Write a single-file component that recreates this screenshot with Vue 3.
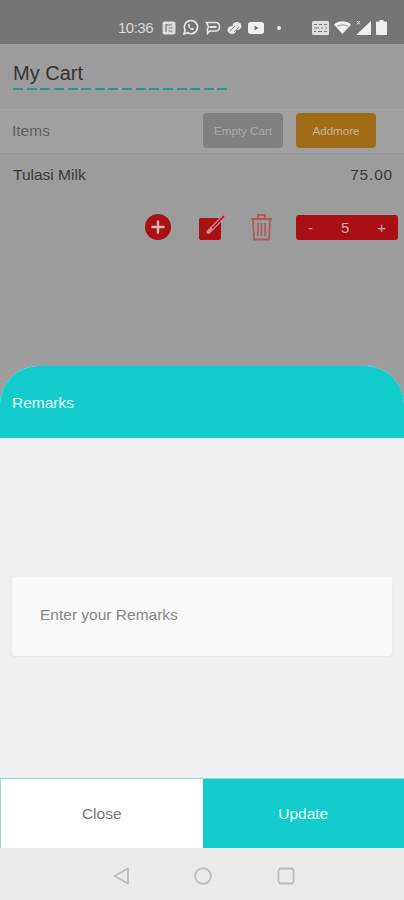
<template>
  <div class="screen">
    <!-- status bar -->
    <div class="status-bar">
      <span class="clock">10:36</span>
      <div class="status-icons">
        <svg width="14" height="14" viewBox="0 0 14 14"><rect x="0.5" y="0.5" width="13" height="13" rx="2" fill="#dcdcdc"/><path d="M4 3v8M4 4h6M6.5 7h4M6.5 10h4" stroke="#757575" stroke-width="1.2" fill="none"/></svg>
        <svg width="17" height="17" viewBox="0 0 17 17"><path d="M2 15l1-4a6.6 6.6 0 1 1 2.6 2.8z" fill="none" stroke="#e6e6e6" stroke-width="1.7"/><path d="M6 5.5c0 3 2.500 5.500 5.200 5.800l.8-1.600-1.800-1-.8.700c-1-.4-1.600-1.100-2-2l.7-.8-.9-1.800z" fill="#e6e6e6"/></svg>
        <svg width="16" height="15" viewBox="0 0 16 15"><path d="M1.500 2.500h9c2.500 0 4 2 4 4.500s-1.500 4-4 4h-6l-2 2.500v-4.500l1-2-2-4.500z" fill="none" stroke="#e6e6e6" stroke-width="1.500"/><rect x="4.500" y="6" width="7" height="2" fill="#e6e6e6"/></svg>
        <svg width="15" height="14" viewBox="0 0 15 14"><ellipse cx="5" cy="9" rx="4.500" ry="4" fill="#e6e6e6"/><ellipse cx="10" cy="5" rx="4.500" ry="4" fill="#e6e6e6"/><path d="M3 10l5-5M7 11l5-5" stroke="#757575" stroke-width="0.800"/></svg>
        <svg width="16" height="12" viewBox="0 0 16 12"><rect width="16" height="12" rx="2.500" fill="#f0f0f0"/><path d="M6.500 3.500v5l4-2.500z" fill="#757575"/></svg>
        <span class="dot"></span>
      </div>
      <div class="status-right">
        <svg width="17" height="14" viewBox="0 0 17 14"><rect width="17" height="14" rx="1.500" fill="#dedede"/><path d="M2 3.500h3M7 3.500h3M12 3.500h3M2 7h5M9 7h2M13 7h2M2 10.500h2M6 10.500h4M12 10.500h3" stroke="#757575" stroke-width="1.200"/></svg>
        <svg width="17" height="13" viewBox="0 0 17 13"><path d="M0 3.500C4.500-.8 12.500-.8 17 3.500L8.500 13z" fill="#f0f0f0"/><path d="M3.200 5.300c3-1.800 7.600-1.800 10.600 0" stroke="#757575" stroke-width="0.800" fill="none"/></svg>
        <svg width="15" height="15" viewBox="0 0 15 15"><path d="M15 1v14H0z" fill="#f0f0f0"/><path d="M1 1l3 3.500M4 1L1 4.500" stroke="#e6e6e6" stroke-width="1"/></svg>
        <svg width="11" height="15" viewBox="0 0 11 15"><path d="M3.500 0h4v1.500H10a1 1 0 0 1 1 1V14a1 1 0 0 1-1 1H1a1 1 0 0 1-1-1V2.500a1 1 0 0 1 1-1h2.500z" fill="#f0f0f0"/></svg>
      </div>
    </div>

    <!-- page behind the sheet -->
    <div class="cart-page">
      <div class="cart-head">
        <h1 class="cart-title">My Cart</h1>
        <div class="dash-line"></div>
      </div>

      <div class="items-row">
        <span class="items-label">Items</span>
        <button class="btn btn-empty">Empty Cart</button>
        <button class="btn btn-add">Addmore</button>
      </div>

      <div class="product-row">
        <span>Tulasi Milk</span>
        <span class="price">75.00</span>
      </div>

      <div class="actions-row">
        <svg width="26" height="26" viewBox="0 0 26 26"><circle cx="13" cy="13" r="13" fill="#a81014"/><path d="M13 7.500v11M7.500 13h11" stroke="#ddb6b6" stroke-width="2.400" stroke-linecap="round"/></svg>
        <svg class="act-edit" width="27" height="27" viewBox="0 0 27 27"><path d="M2 4h20v20a2 2 0 0 1-2 2H2a2 2 0 0 1-2-2V6a2 2 0 0 1 2-2z" fill="#a81014"/><path d="M9.500 18L25 2" stroke="#c98a8a" stroke-width="4" stroke-linecap="round"/><path d="M13 14.500L25 2" stroke="#a81014" stroke-width="1.400"/></svg>
        <svg class="act-trash" width="23" height="28" viewBox="0 0 23 28"><path d="M1 6h21M8 5V2h7v3" stroke="#b45a5e" stroke-width="1.800" fill="none"/><path d="M3 6.500l1 20h15l1-20" fill="none" stroke="#b45a5e" stroke-width="1.800"/><path d="M8 10v13M11.500 10v13M15 10v13" stroke="#b45a5e" stroke-width="1.600"/></svg>
        <div class="stepper">
          <span>-</span>
          <span>5</span>
          <span>+</span>
        </div>
      </div>
    </div>

    <!-- remarks sheet -->
    <div class="sheet">
      <div class="sheet-head">Remarks</div>
      <div class="sheet-body">
        <div class="remarks-input">Enter your Remarks</div>
      </div>
      <div class="sheet-foot">
        <button class="foot-btn foot-close">Close</button>
        <button class="foot-btn foot-update">Update</button>
      </div>
    </div>

    <!-- android nav -->
    <div class="nav-bar">
      <svg width="16" height="18" viewBox="0 0 16 18"><path d="M15 1.500v15L1.500 9z" fill="none" stroke="#bdbdbd" stroke-width="1.800" stroke-linejoin="round"/></svg>
      <svg width="18" height="18" viewBox="0 0 18 18"><circle cx="9" cy="9" r="7.800" fill="none" stroke="#bdbdbd" stroke-width="1.800"/></svg>
      <svg width="18" height="18" viewBox="0 0 18 18"><rect x="1.500" y="1.500" width="15" height="15" rx="2.500" fill="none" stroke="#bdbdbd" stroke-width="1.800"/></svg>
    </div>
  </div>
</template>

<script setup>
</script>

<style>
html, body {
  margin: 0;
  padding: 0;
}
</style>

<style scoped>
.screen {
  width: 404px;
  height: 900px;
  display: flex;
  flex-direction: column;
  overflow: hidden;
  background: #9c9c9c;
  font-family: "Liberation Sans", Arial, sans-serif;
}

/* status bar */
.status-bar {
  height: 44px;
  flex: none;
  display: flex;
  align-items: center;
  background: #757575;
  color: #d8d8d8;
  box-sizing: border-box;
  padding: 11px 17px 0 118px;
}

.clock {
  font-size: 15px;
  letter-spacing: -0.5px;
  width: 44px;
}

.status-icons {
  display: flex;
  align-items: center;
  gap: 6px;
}

.dot {
  width: 4px;
  height: 4px;
  margin-left: 7px;
  border-radius: 50%;
  background: #e6e6e6;
}

.status-right {
  margin-left: auto;
  display: flex;
  align-items: center;
  gap: 5px;
}

/* cart */
.cart-page {
  flex: 1;
  min-height: 0;
}

.cart-head {
  height: 65px;
  box-sizing: border-box;
  padding: 18px 0 0 13px;
}

.cart-title {
  margin: 0;
  font-size: 20px;
  line-height: 23px;
  font-weight: 400;
  color: #333;
}

.dash-line {
  width: 214.500px;
  height: 2px;
  margin-top: 3px;
  background: repeating-linear-gradient(90deg, #1c9c98 0 10px, transparent 10px 13.630px);
}

.items-row {
  height: 45px;
  box-sizing: border-box;
  display: flex;
  align-items: center;
  padding: 0 28px 2px 12px;
  background: #a0a0a0;
  border-top: 1px solid #a6a6a6;
  border-bottom: 1px solid #969696;
}

.items-label {
  font-size: 15.500px;
  color: #606060;
  margin-right: auto;
}

.btn {
  height: 35px;
  width: 80px;
  border: none;
  border-radius: 4px;
  padding: 0;
  font-family: inherit;
  font-size: 11.600px;
  color: #ababab;
}

.btn-empty {
  background: #808080;
  margin-right: 13px;
}

.btn-add {
  background: #a06c18;
  color: #c4b595;
}

.product-row {
  display: flex;
  justify-content: space-between;
  padding: 12px 11px 0 13px;
  font-size: 15.500px;
  line-height: 17px;
  color: #3a3a3a;
}

.price {
  letter-spacing: 0.8px;
}

.actions-row {
  display: flex;
  align-items: center;
  margin-top: 30px;
  padding: 0 6px 0 145px;
}

.act-edit {
  margin-left: 28px;
}

.act-trash {
  margin-left: 24px;
}

.stepper {
  margin-left: 23px;
  width: 102px;
  height: 25px;
  box-sizing: border-box;
  padding: 0 12px;
  display: flex;
  align-items: center;
  justify-content: space-between;
  border-radius: 3px;
  background: #a81014;
  color: #d2a9a9;
  font-size: 15px;
}

/* sheet */
.sheet {
  flex: none;
  height: 482px;
  display: flex;
  flex-direction: column;
  background: #eff0f4;
  border-radius: 38px 38px 0 0;
  overflow: hidden;
}

.sheet-head {
  height: 72px;
  box-sizing: border-box;
  padding: 28px 0 0 12px;
  background: #12cbcb;
  color: #e6fafa;
  font-size: 15.500px;
  line-height: 18px;
}

.sheet-body {
  flex: 1;
  padding: 139px 12px 0;
}

.remarks-input {
  height: 79px;
  box-sizing: border-box;
  padding: 29px 0 0 28px;
  background: #f9fafc;
  border-radius: 3px;
  box-shadow: 0 1px 2px rgba(0, 0, 0, 0.05);
  color: #868686;
  font-size: 15.500px;
  line-height: 18px;
}

.sheet-foot {
  display: flex;
  height: 70px;
  flex: none;
  box-sizing: border-box;
  border-top: 1px solid #8fd8d8;
}

.foot-btn {
  flex: 1;
  border: none;
  padding: 0;
  font-family: inherit;
  font-size: 15.500px;
}

.foot-close {
  background: #fff;
  color: #777;
  border-left: 1px solid #9fdcdc;
}

.foot-update {
  background: #12cbcb;
  color: #e6fafa;
}

/* android nav */
.nav-bar {
  height: 52px;
  flex: none;
  box-sizing: border-box;
  display: flex;
  align-items: center;
  justify-content: center;
  gap: 65px;
  padding: 3px 0 0 3px;
  background: #ebebeb;
}
</style>
